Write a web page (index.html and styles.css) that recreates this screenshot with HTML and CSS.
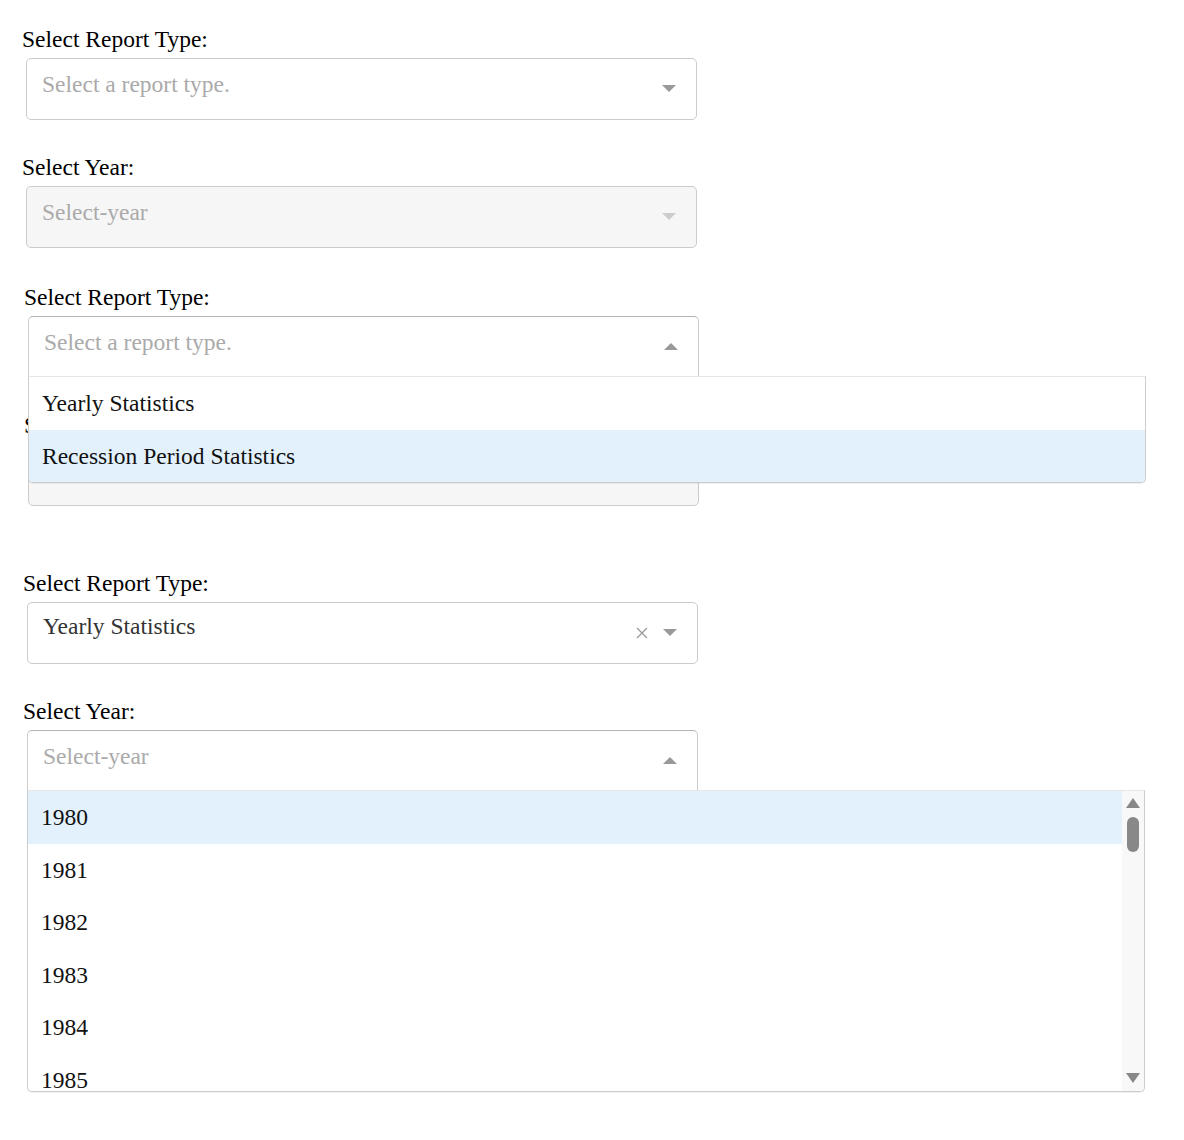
FILE: index.html
```html
<!DOCTYPE html>
<html>
<head>
<meta charset="utf-8">
<link rel="stylesheet" href="styles.css">
</head>
<body>
<div class="page">
  <section class="panel p1">
    <div class="field">
      <div class="lbl">Select Report Type:</div>
      <div class="dd">
        <span class="ph">Select a report type.</span>
        <span class="icons"><svg class="arrow" width="14" height="7" viewBox="0 0 14 7"><polygon points="0,0 14,0 7,7" fill="#999"/></svg></span>
      </div>
    </div>
    <div class="field">
      <div class="lbl">Select Year:</div>
      <div class="dd disabled">
        <span class="ph">Select-year</span>
        <span class="icons"><svg class="arrow" width="14" height="7" viewBox="0 0 14 7"><polygon points="0,0 14,0 7,7" fill="#ccc"/></svg></span>
      </div>
    </div>
  </section>

  <section class="panel p2">
    <div class="field top">
      <div class="lbl">Select Report Type:</div>
      <div class="dd open">
        <span class="ph">Select a report type.</span>
        <span class="icons"><svg class="arrow" width="14" height="7" viewBox="0 0 14 7"><polygon points="0,7 14,7 7,0" fill="#999"/></svg></span>
        <div class="menu short">
          <div class="opt">Yearly Statistics</div>
          <div class="opt hl">Recession Period Statistics</div>
        </div>
      </div>
    </div>
    <div class="field">
      <div class="lbl">Select Year:</div>
      <div class="dd disabled">
        <span class="ph">Select-year</span>
        <span class="icons"><svg class="arrow" width="14" height="7" viewBox="0 0 14 7"><polygon points="0,0 14,0 7,7" fill="#ccc"/></svg></span>
      </div>
    </div>
  </section>

  <section class="panel p3">
    <div class="field">
      <div class="lbl">Select Report Type:</div>
      <div class="dd">
        <span class="val">Yearly Statistics</span>
        <span class="icons">
          <svg class="clear" width="12" height="12" viewBox="0 0 12 12"><path d="M1 1L11 11M11 1L1 11" stroke="#999" stroke-width="1.3" fill="none"/></svg>
          <svg class="arrow" width="14" height="7" viewBox="0 0 14 7"><polygon points="0,0 14,0 7,7" fill="#999"/></svg>
        </span>
      </div>
    </div>
    <div class="field">
      <div class="lbl">Select Year:</div>
      <div class="dd open">
        <span class="ph">Select-year</span>
        <span class="icons"><svg class="arrow" width="14" height="7" viewBox="0 0 14 7"><polygon points="0,7 14,7 7,0" fill="#999"/></svg></span>
        <div class="menu tall">
          <div class="list">
            <div class="opt hl">1980</div>
            <div class="opt">1981</div>
            <div class="opt">1982</div>
            <div class="opt">1983</div>
            <div class="opt">1984</div>
            <div class="opt">1985</div>
          </div>
          <div class="sbar">
            <svg class="sb-up" width="14" height="11" viewBox="0 0 14 11"><polygon points="0,11 14,11 7,1" fill="#888"/></svg>
            <div class="thumb"></div>
            <div class="sb-fill"></div>
            <svg class="sb-down" width="14" height="11" viewBox="0 0 14 11"><polygon points="0,0 14,0 7,10" fill="#888"/></svg>
          </div>
        </div>
      </div>
    </div>
  </section>
</div>
</body>
</html>
```

FILE: styles.css
```css
html, body {
  margin: 0;
  padding: 0;
  background: #fff;
}
body {
  min-height: 1140px;
}
.page {
  font-family: "Liberation Serif", "Times New Roman", serif;
  font-size: 23.5px;
  color: #000;
  width: 1184px;
  min-height: 1140px;
}
.panel {
  display: flex;
  flex-direction: column;
}
.p1 { padding: 25px 0 0 22px; }
.p2 { padding: 2px 0 0 24px; }
.p3 { padding: 30px 0 0 23px; }
.field {
  display: flex;
  flex-direction: column;
  margin-bottom: 33px;
}
.field.top { position: relative; z-index: 2; }
.lbl {
  line-height: 28px;
  height: 28px;
  margin-bottom: 5px;
}
.dd {
  position: relative;
  margin-left: 4px;
  width: 671px;
  height: 62px;
  box-sizing: border-box;
  border: 1px solid #ccc;
  border-radius: 5px;
  background: #fff;
  display: flex;
  align-items: flex-start;
  padding: 8px 0 0 15px;
}
.dd.disabled { background: #f6f6f6; }
.dd.open {
  border-color: #b3b3b3 #ccc #d9d9d9;
  border-bottom-left-radius: 0;
  border-bottom-right-radius: 0;
}
.ph {
  color: #aaa;
  line-height: 34px;
  flex: 1;
}
.val {
  color: #333;
  line-height: 30px;
  flex: 1;
}
.icons {
  display: flex;
  align-items: center;
  gap: 15px;
  height: 43px;
  padding-right: 20px;
}
.arrow { display: block; }
.clear { display: block; }
.menu {
  position: absolute;
  left: -1px;
  top: 100%;
  margin-top: -1px;
  width: 1118px;
  box-sizing: border-box;
  background: #fff;
  border: 1px solid #ccc;
  border-top-color: #e6e6e6;
  border-bottom-left-radius: 5px;
  border-bottom-right-radius: 5px;
  box-shadow: 0 1px 0 rgba(0,0,0,0.06);
  overflow: hidden;
  z-index: 5;
}
.menu.short { height: 107px; }
.menu.tall {
  height: 302px;
  display: flex;
}
.list {
  flex: 1;
  overflow: hidden;
}
.opt {
  height: 52.5px;
  line-height: 52.5px;
  padding-left: 13px;
  color: #111;
  white-space: nowrap;
}
.opt.hl { background: #e3f1fd; }
.sbar {
  width: 22px;
  background: #f8f8f8;
  display: flex;
  flex-direction: column;
  align-items: center;
}
.sb-up { margin-top: 6px; display: block; }
.thumb {
  width: 12px;
  height: 35px;
  border-radius: 6px;
  background: #888;
  margin-top: 9px;
}
.sb-fill { flex: 1; }
.sb-down { margin-bottom: 7px; display: block; }
```
